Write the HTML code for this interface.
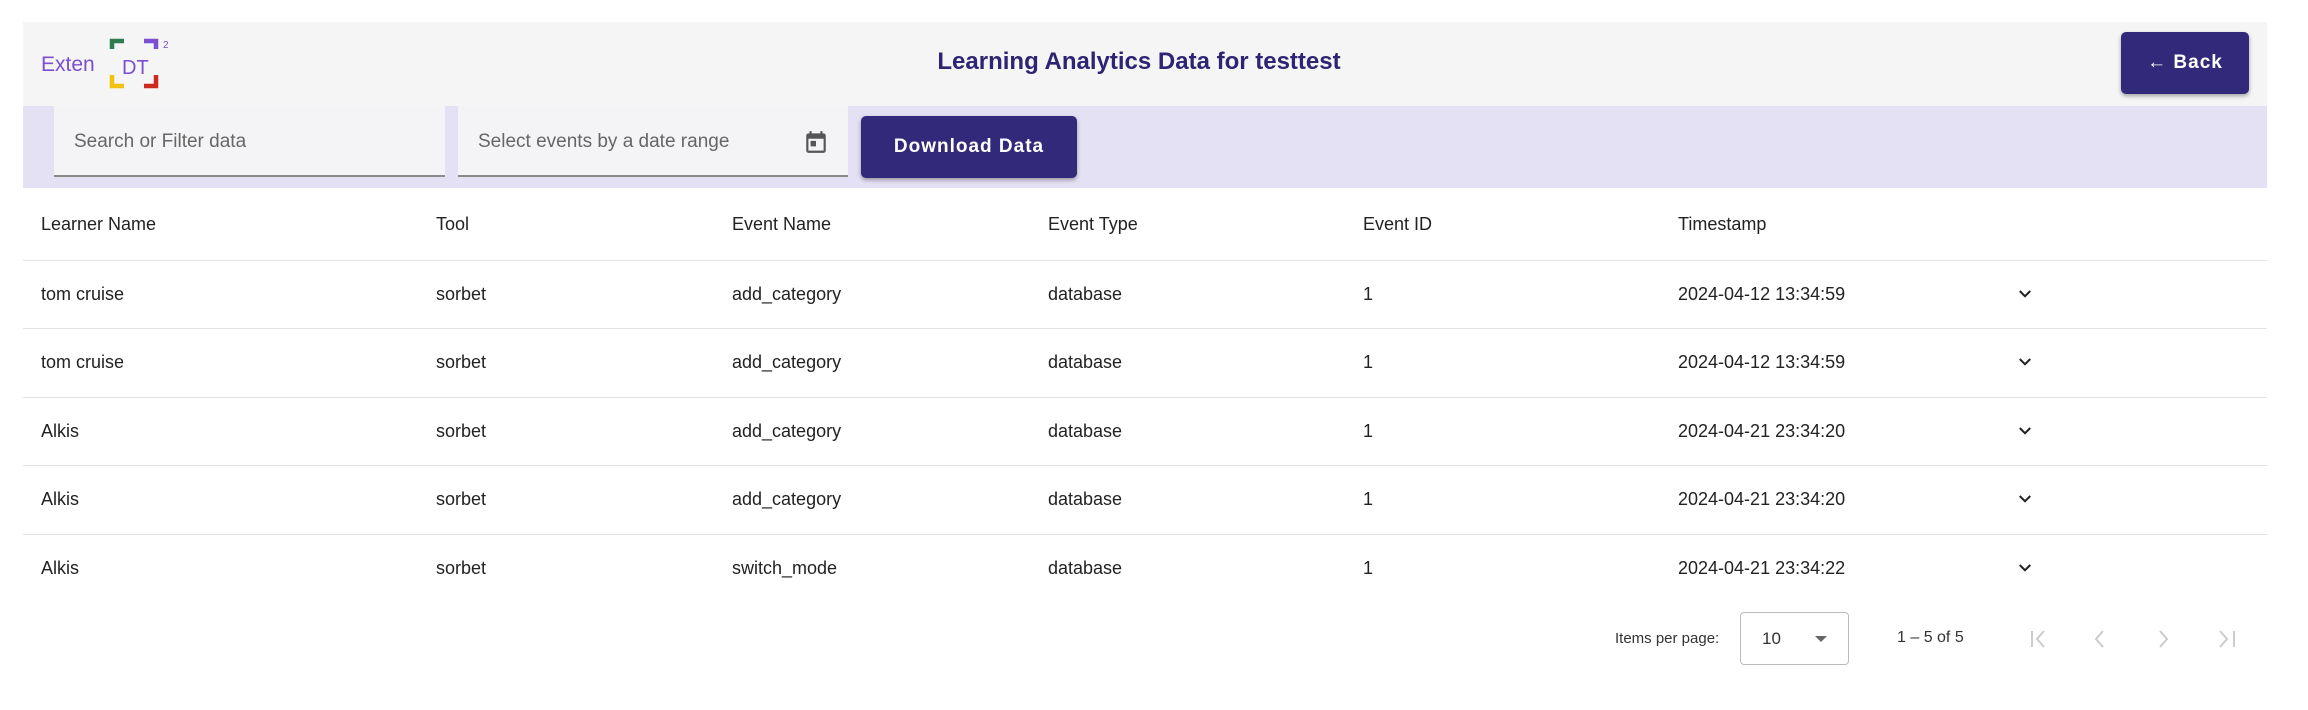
<!DOCTYPE html>
<html><head><meta charset="utf-8"><style>
body{margin:0;width:2308px;height:710px;background:#fff;font-family:"Liberation Sans",Arial,sans-serif;position:relative;overflow:hidden;color:#222}
.a{position:absolute}
.hdr{left:23px;top:22px;width:2244px;height:84px;background:#f5f5f5}
.flt{left:23px;top:106px;width:2244px;height:82px;background:#e4e1f4}
.fld{top:106px;height:71px;background:#f4f4f6;border-bottom:2px solid #8a8a8a;color:#666;font-size:19px;line-height:71px;padding-left:20px;box-sizing:border-box}
.btn{background:#33297a;color:#fff;font-weight:bold;font-size:19px;letter-spacing:1px;border-radius:5px;box-shadow:0 2px 4px rgba(0,0,0,.35);text-align:center}
.t{font-size:18px;color:#222}
.line{left:23px;width:2244px;height:1px;background:#e2e2e2}
.ch{width:18px;height:18px}
</style></head><body>
<div class="a hdr"></div>
<div class="a" style="left:41px;top:53px;font-size:21px;color:#7b4fd0">Exten</div>
<svg class="a" style="left:108px;top:37px" width="64" height="54">
<path d="M4 12V4H16" stroke="#2e7d4f" stroke-width="4.5" fill="none"/>
<path d="M36 4H48V12" stroke="#7b4fd0" stroke-width="4.5" fill="none"/>
<path d="M4 38V49H16" stroke="#f2c20f" stroke-width="4.5" fill="none"/>
<path d="M36 49H48V38" stroke="#cc2a1f" stroke-width="4.5" fill="none"/>
<text x="14" y="37" font-size="20" fill="#7b4fd0" font-family="Liberation Sans">DT</text>
<text x="55" y="11" font-size="10" fill="#7b4fd0" font-family="Liberation Sans">2</text>
</svg>
<div class="a" style="left:0;width:2278px;top:48px;text-align:center;font-size:24px;font-weight:bold;color:#2d2573">Learning Analytics Data for testtest</div>
<div class="a btn" style="left:2121px;top:32px;width:128px;height:62px;line-height:62px">← Back</div>
<div class="a flt"></div>
<div class="a fld" style="left:54px;width:391px">Search or Filter data</div>
<div class="a fld" style="left:458px;width:390px">Select events by a date range</div>
<svg class="a" style="left:803px;top:128px" width="26" height="28" viewBox="0 0 24 24"><path fill="#555" d="M19 4h-1V2h-2v2H8V2H6v2H5C3.9 4 3 4.9 3 6v14c0 1.1.9 2 2 2h14c1.1 0 2-.9 2-2V6c0-1.1-.9-2-2-2zm0 16H5V9h14v11zM7 11h5v5H7z"/></svg>
<div class="a btn" style="left:861px;top:116px;width:216px;height:62px;line-height:62px">Download Data</div>

<div class="a t" style="top:214px;left:41px">Learner Name</div>
<div class="a t" style="top:214px;left:436px">Tool</div>
<div class="a t" style="top:214px;left:732px">Event Name</div>
<div class="a t" style="top:214px;left:1048px">Event Type</div>
<div class="a t" style="top:214px;left:1363px">Event ID</div>
<div class="a t" style="top:214px;left:1678px">Timestamp</div>
<div class="a line" style="top:260px"></div>

<div class="a t" style="top:284px;left:41px">tom cruise</div><div class="a t" style="top:284px;left:436px">sorbet</div><div class="a t" style="top:284px;left:732px">add_category</div><div class="a t" style="top:284px;left:1048px">database</div><div class="a t" style="top:284px;left:1363px">1</div><div class="a t" style="top:284px;left:1678px">2024-04-12 13:34:59</div>
<div class="a line" style="top:328px"></div>
<div class="a t" style="top:352px;left:41px">tom cruise</div><div class="a t" style="top:352px;left:436px">sorbet</div><div class="a t" style="top:352px;left:732px">add_category</div><div class="a t" style="top:352px;left:1048px">database</div><div class="a t" style="top:352px;left:1363px">1</div><div class="a t" style="top:352px;left:1678px">2024-04-12 13:34:59</div>
<div class="a line" style="top:397px"></div>
<div class="a t" style="top:421px;left:41px">Alkis</div><div class="a t" style="top:421px;left:436px">sorbet</div><div class="a t" style="top:421px;left:732px">add_category</div><div class="a t" style="top:421px;left:1048px">database</div><div class="a t" style="top:421px;left:1363px">1</div><div class="a t" style="top:421px;left:1678px">2024-04-21 23:34:20</div>
<div class="a line" style="top:465px"></div>
<div class="a t" style="top:489px;left:41px">Alkis</div><div class="a t" style="top:489px;left:436px">sorbet</div><div class="a t" style="top:489px;left:732px">add_category</div><div class="a t" style="top:489px;left:1048px">database</div><div class="a t" style="top:489px;left:1363px">1</div><div class="a t" style="top:489px;left:1678px">2024-04-21 23:34:20</div>
<div class="a line" style="top:534px"></div>
<div class="a t" style="top:558px;left:41px">Alkis</div><div class="a t" style="top:558px;left:436px">sorbet</div><div class="a t" style="top:558px;left:732px">switch_mode</div><div class="a t" style="top:558px;left:1048px">database</div><div class="a t" style="top:558px;left:1363px">1</div><div class="a t" style="top:558px;left:1678px">2024-04-21 23:34:22</div>

<svg class="a ch" style="left:2016px;top:285px" viewBox="0 0 24 24"><path d="M5 8l7 7 7-7" stroke="#222" stroke-width="2.6" fill="none"/></svg>
<svg class="a ch" style="left:2016px;top:353px" viewBox="0 0 24 24"><path d="M5 8l7 7 7-7" stroke="#222" stroke-width="2.6" fill="none"/></svg>
<svg class="a ch" style="left:2016px;top:422px" viewBox="0 0 24 24"><path d="M5 8l7 7 7-7" stroke="#222" stroke-width="2.6" fill="none"/></svg>
<svg class="a ch" style="left:2016px;top:490px" viewBox="0 0 24 24"><path d="M5 8l7 7 7-7" stroke="#222" stroke-width="2.6" fill="none"/></svg>
<svg class="a ch" style="left:2016px;top:559px" viewBox="0 0 24 24"><path d="M5 8l7 7 7-7" stroke="#222" stroke-width="2.6" fill="none"/></svg>

<div class="a" style="left:1615px;top:630px;font-size:15px;color:#333">Items per page:</div>
<div class="a" style="left:1740px;top:612px;width:107px;height:51px;border:1px solid #bbb;border-radius:4px"></div>
<div class="a" style="left:1762px;top:629px;font-size:17px;color:#333">10</div>
<div class="a" style="left:1815px;top:636px;width:0;height:0;border-left:6px solid transparent;border-right:6px solid transparent;border-top:6px solid #666"></div>
<div class="a" style="left:1897px;top:629px;font-size:16px;color:#333">1 – 5 of 5</div>
<svg class="a" style="left:2028px;top:626px" width="220" height="26" viewBox="0 0 220 26" fill="none" stroke="#ccc" stroke-width="2">
<path d="M4 5v16M16 5l-7 8 7 8"/>
<path d="M75 5l-7 8 7 8"/>
<path d="M132 5l7 8-7 8"/>
<path d="M192 5l7 8-7 8M206 5v16"/>
</svg>
</body></html>
